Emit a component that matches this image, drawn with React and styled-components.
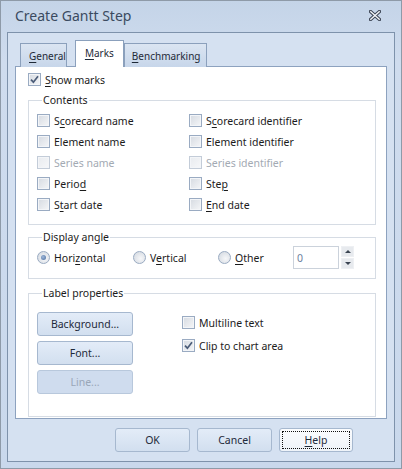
import React from "react";
import styled, { createGlobalStyle, css } from "styled-components";

const GlobalStyle = createGlobalStyle`
  html, body {
    margin: 0;
    padding: 0;
    background: #ffffff;
  }
  body {
    font-family: "Noto Sans", "Liberation Sans", sans-serif;
    font-size: 10.5px;
    color: #1b1b1b;
  }
  * {
    box-sizing: border-box;
  }
`;

const Window = styled.div`
  width: 402px;
  height: 469px;
  border: 1px solid #8e9aa8;
  background: linear-gradient(#c4d4e8, #cfdcee 60px, #c9d8ec);
  display: flex;
  flex-direction: column;
  padding: 0 6px 6px 6px;
`;

const TitleBar = styled.div`
  height: 31px;
  display: flex;
  align-items: center;
  justify-content: space-between;
  padding: 0 14px 2px 8px;
`;

const Title = styled.div`
  font-size: 14px;
  color: #3a4a60;
`;

const Frame = styled.div`
  flex: 1;
  border: 1px solid #7e92ab;
  background: #d5e1f1;
  display: flex;
  flex-direction: column;
  padding: 0 7px;
`;

const TabRow = styled.div`
  display: flex;
  align-items: flex-end;
  height: 34px;
  padding-left: 5px;
  margin-bottom: -1px;
  position: relative;
  z-index: 1;
`;

const Tab = styled.div`
  height: 24px;
  padding: 0 ${(p) => p.$pr ?? 8}px 0 ${(p) => p.$pl ?? 8}px;
  display: flex;
  align-items: center;
  border: 1px solid #8ba0bc;
  border-bottom: none;
  background: linear-gradient(#dbe5f2, #c7d6ea);
  color: #1f2a38;
  font-size: 10px;
  margin-right: ${(p) => p.$gap || 0}px;
  ${(p) =>
    p.$active &&
    css`
      height: 27px;
      background: #ffffff;
      padding-bottom: 2px;
    `}
`;

const Panel = styled.div`
  height: 353px;
  border: 1px solid #8da2bf;
  background: #ffffff;
  display: flex;
  flex-direction: column;
  padding: 4px 10px 1px 12px;
`;

const Group = styled.fieldset`
  margin: 0;
  border: 1px solid #d6dce4;
  padding: ${(p) => p.$top ?? 3}px 8px 9px 8px;
  min-width: 0;
  ${(p) =>
    p.$fill &&
    css`
      flex: 1;
      padding-top: 12px;
    `}
`;

const Legend = styled.legend`
  padding: 0 1px;
  margin-left: 5px;
  line-height: 14px;
  color: #1b1b1b;
`;

const Stack = styled.div`
  display: flex;
  flex-direction: column;
  gap: ${(p) => p.$gap || 0}px;
  margin-top: ${(p) => p.$top || 0}px;
  ${(p) => p.$fill && "flex: 1;"}
`;

const CheckGrid = styled.div`
  display: grid;
  grid-template-columns: 152px 1fr;
`;

const Option = styled.label`
  display: flex;
  align-items: center;
  gap: 4px;
  height: ${(p) => p.$h || 21}px;
  color: ${(p) => (p.$disabled ? "#a3aab3" : "#1b1b1b")};
  white-space: nowrap;
`;

const Box = styled.span`
  width: 13px;
  height: 13px;
  flex: none;
  border: 1px solid ${(p) => (p.$disabled ? "#c3ccd8" : "#9aabc2")};
  background: ${(p) =>
    p.$disabled
      ? "linear-gradient(135deg, #e8ebef, #f6f7f9)"
      : "linear-gradient(135deg, #d5dae1, #f5f6f8)"};
  box-shadow: inset 0 0 0 1px #f3f5f8;
  display: flex;
  align-items: center;
  justify-content: center;
`;

const Radio = styled.span`
  width: 13px;
  height: 13px;
  flex: none;
  border-radius: 50%;
  border: 1px solid #9aabc2;
  background: radial-gradient(circle at 60% 60%, #f6f7f9, #d0d6de);
  display: flex;
  align-items: center;
  justify-content: center;
  &::after {
    content: "";
    width: 5px;
    height: 5px;
    border-radius: 50%;
    background: ${(p) =>
      p.$on ? "radial-gradient(circle at 40% 40%, #9fb8da, #4a6c9c)" : "transparent"};
  }
`;

const AngleRow = styled.div`
  display: grid;
  grid-template-columns: 96px 85px 75px auto;
  align-items: center;
  height: 23px;
`;

const Spin = styled.div`
  display: flex;
  align-items: stretch;
  gap: 2px;
  height: 23px;
`;

const SpinInput = styled.div`
  width: 46px;
  border: 1px solid #cbd2db;
  color: #6d7fa0;
  display: flex;
  align-items: center;
  padding-left: 3px;
`;

const SpinButtons = styled.div`
  display: flex;
  flex-direction: column;
  gap: 1px;
  width: 13px;
`;

const SpinButton = styled.div`
  flex: 1;
  background: #e7eaee;
  border: 1px solid #eef0f3;
  display: flex;
  align-items: center;
  justify-content: center;
  &::after {
    content: "";
    border-left: 3px solid transparent;
    border-right: 3px solid transparent;
    ${(p) =>
      p.$down
        ? "border-top: 3px solid #3b4552;"
        : "border-bottom: 3px solid #3b4552;"}
  }
`;

const LabelLayout = styled.div`
  display: flex;
  gap: 49px;
`;

const Button = styled.div`
  width: ${(p) => p.$w || 96}px;
  height: 24px;
  border: 1px solid ${(p) => (p.$disabled ? "#b8c8dc" : "#a6b8cf")};
  border-radius: 3px;
  background: ${(p) =>
    p.$disabled
      ? "#cfdcee"
      : p.$focus
      ? "linear-gradient(#fbfcfe, #eef3f9)"
      : "linear-gradient(#e3ecf8, #d2dfef)"};
  color: ${(p) => (p.$disabled ? "#9aa7b8" : "#1e2a3a")};
  display: flex;
  align-items: center;
  justify-content: center;
  position: relative;
  ${(p) =>
    p.$focus &&
    css`
      &::before {
        content: "";
        position: absolute;
        inset: 2px;
        border: 1px dotted #111;
      }
    `}
`;

const Footer = styled.div`
  flex: 1;
  display: flex;
  justify-content: flex-end;
  align-items: flex-start;
  gap: 7px;
  padding: 9px 34px 0 0;
`;

const U = styled.span`
  text-decoration: underline;
  text-underline-offset: 2px;
`;

const CloseIcon = () => (
  <svg width="12" height="11" viewBox="0 0 12 11">
    <path d="M1.5 1.5 L10.5 9.5 M10.5 1.5 L1.5 9.5" stroke="#3d4656" strokeWidth="3.4" strokeLinecap="square" />
    <path d="M1.8 1.7 L10.2 9.3 M10.2 1.7 L1.8 9.3" stroke="#f4f6f9" strokeWidth="1.4" strokeLinecap="square" />
  </svg>
);

const Check = ({ checked, disabled }) => (
  <Box $disabled={disabled}>
    {checked && (
      <svg width="9" height="9" viewBox="0 0 9 9">
        <path d="M1 4.6 L3.4 7.2 L8 1.2" fill="none" stroke="#4b5c78" strokeWidth="1.7" />
      </svg>
    )}
  </Box>
);

const CheckOption = ({ children, checked, disabled, h }) => (
  <Option $disabled={disabled} $h={h}>
    <Check checked={checked} disabled={disabled} />
    <span>{children}</span>
  </Option>
);

const contents = [
  [<>S<U>c</U>orecard name</>, <>S<U>c</U>orecard identifier</>, false],
  [<>Element name</>, <>Element identifier</>, false],
  [<>Series name</>, <>Series identifier</>, true],
  [<>Perio<U>d</U></>, <>Ste<U>p</U></>, false],
  [<>S<U>t</U>art date</>, <><U>E</U>nd date</>, false],
];

export default function App() {
  return (
    <>
      <GlobalStyle />
      <Window>
        <TitleBar>
          <Title>Create Gantt Step</Title>
          <CloseIcon />
        </TitleBar>
        <Frame>
          <TabRow>
            <Tab $gap={8} $pl={8} $pr={0}>
              <U>G</U>eneral
            </Tab>
            <Tab $active $pl={9} $pr={9}>
              <U>M</U>arks
            </Tab>
            <Tab $pl={7} $pr={6}>
              <U>B</U>enchmarking
            </Tab>
          </TabRow>
          <Panel>
            <Option $h={17}>
              <Check checked />
              <span>
                <U>S</U>how marks
              </span>
            </Option>
            <Stack $gap={5} $top={5}>
              <Group>
                <Legend>Contents</Legend>
                <CheckGrid>
                  {contents.map(([l, r, dis], i) => (
                    <React.Fragment key={i}>
                      <CheckOption disabled={dis}>{l}</CheckOption>
                      <CheckOption disabled={dis}>{r}</CheckOption>
                    </React.Fragment>
                  ))}
                </CheckGrid>
              </Group>
              <Group $top={2}>
                <Legend>Display angle</Legend>
                <AngleRow>
                  <Option $h={23}>
                    <Radio $on />
                    <span>
                      Hori<U>z</U>ontal
                    </span>
                  </Option>
                  <Option $h={23}>
                    <Radio />
                    <span>
                      V<U>e</U>rtical
                    </span>
                  </Option>
                  <Option $h={23}>
                    <Radio />
                    <span>
                      <U>O</U>ther
                    </span>
                  </Option>
                  <Spin>
                    <SpinInput>0</SpinInput>
                    <SpinButtons>
                      <SpinButton />
                      <SpinButton $down />
                    </SpinButtons>
                  </Spin>
                </AngleRow>
              </Group>
            </Stack>
            <Stack $top={7} $fill>
              <Group $fill>
                <Legend>Label properties</Legend>
                <LabelLayout>
                  <Stack $gap={5}>
                    <Button>Background...</Button>
                    <Button>Font...</Button>
                    <Button $disabled>Line...</Button>
                  </Stack>
                  <Stack $gap={2}>
                    <CheckOption h={21}>Multiline text</CheckOption>
                    <CheckOption h={21} checked>
                      Clip to chart area
                    </CheckOption>
                  </Stack>
                </LabelLayout>
              </Group>
            </Stack>
          </Panel>
          <Footer>
            <Button $w={75}>OK</Button>
            <Button $w={75}>Cancel</Button>
            <Button $w={74} $focus>
              <U>H</U>elp
            </Button>
          </Footer>
        </Frame>
      </Window>
    </>
  );
}
